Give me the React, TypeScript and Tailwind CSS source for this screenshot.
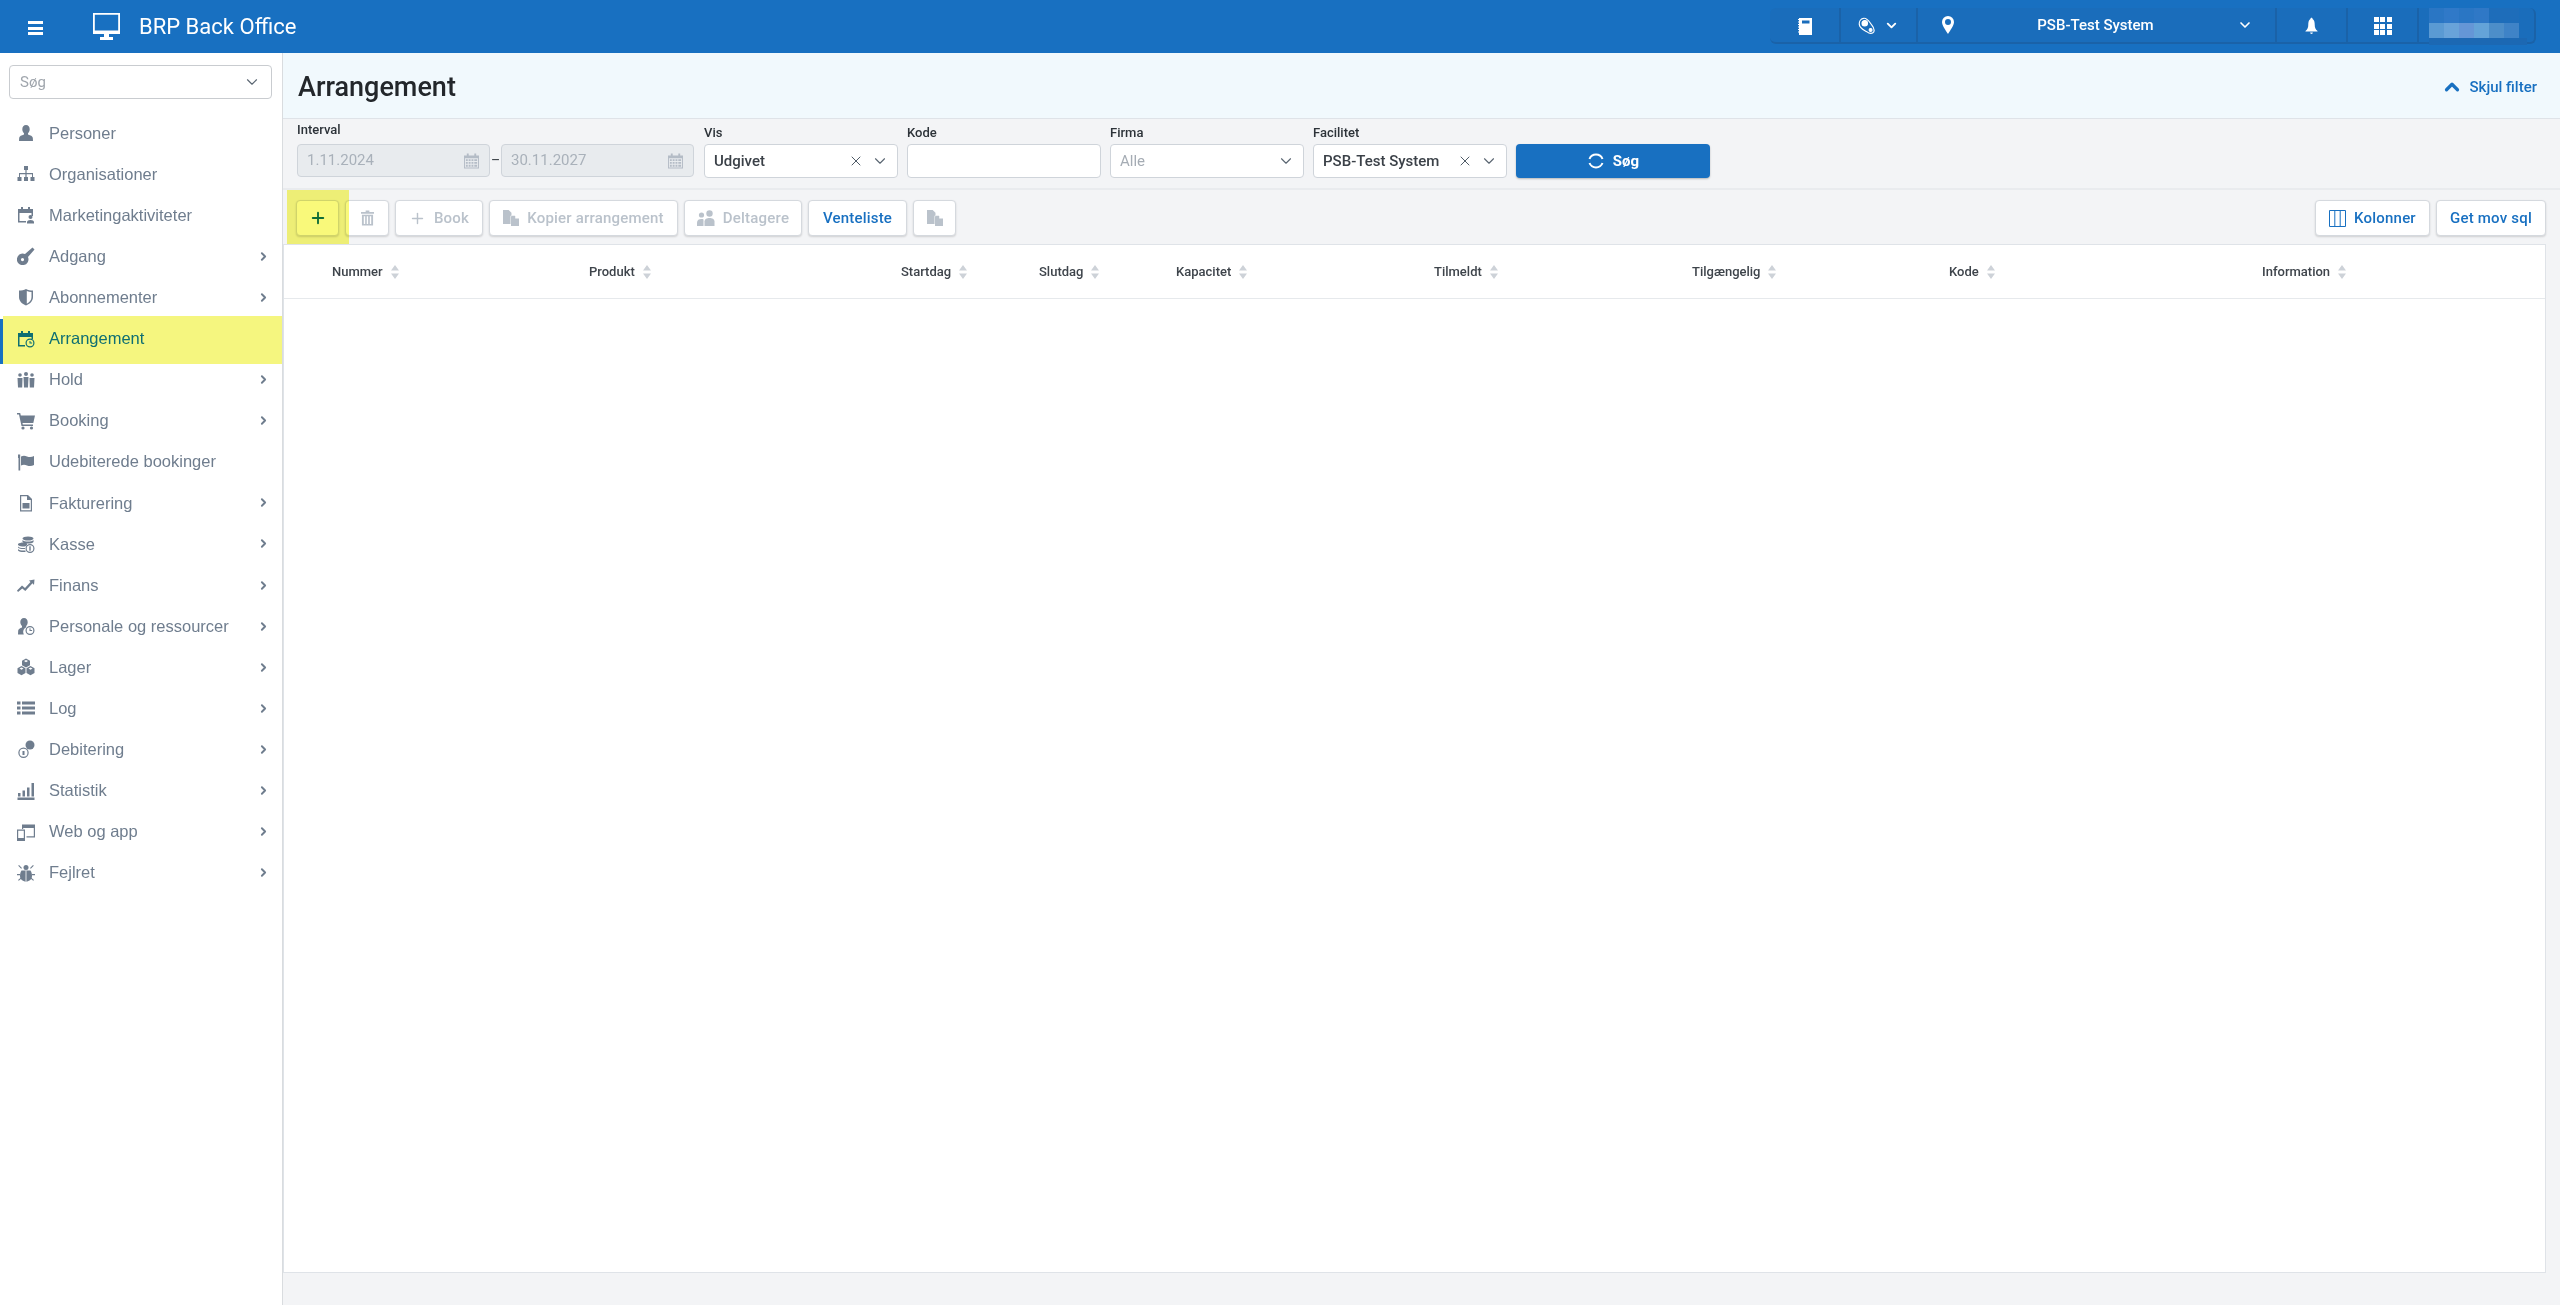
import { ReactNode } from "react";
import { ChevronDown, ChevronRight, ChevronUp, Plus, X } from "lucide-react";

const Svg = ({ children, className = "w-[18px] h-[18px]" }: { children: ReactNode; className?: string }) => (
  <svg viewBox="0 0 18 18" className={className} fill="currentColor">
    {children}
  </svg>
);

const PersonIcon = () => (
  <Svg>
    <path d="M9 1c2.300 0 3.700 1.700 3.700 4.200 0 1.700-.8 3.200-1.700 4v1.300c2.600.8 4.500 1.700 4.800 3.200l.2 3.300H2l.2-3.300c.3-1.500 2.200-2.400 4.800-3.200V9.200C6.100 8.400 5.300 6.900 5.300 5.200 5.300 2.700 6.700 1 9 1z" />
  </Svg>
);
const OrgIcon = () => (
  <Svg>
    <path d="M7 1h4v4H9.600v3H16v4h1.500v4h-4v-4H15V9.200H9.600V12H11v4H7v-4h1.400V9.200H3V12h1.500v4h-4v-4H2V8h6.400V5H7z" />
  </Svg>
);
const CalPersonIcon = () => (
  <Svg>
    <path d="M1 3h3V1h2v2h5V1h2v2h3v7h-1.500V7h-12v8H9v1.500H1z" />
    <circle cx="13.500" cy="11" r="2" />
    <path d="M10 17.500v-1.500c0-1.300 1.700-2 3.500-2s3.500.7 3.500 2v1.500z" />
  </Svg>
);
const KeyIcon = () => (
  <Svg>
    <path d="M15.500 .5L17.500 2.500 11 10a5.800 5.800 0 1 1-3-3zM5.500 11a1.600 1.600 0 1 0 0 3.200 1.600 1.600 0 0 0 0-3.200z" fillRule="evenodd" />
  </Svg>
);
const ShieldIcon = () => (
  <Svg>
    <path d="M2 2.500C4.500 2.500 7 2 9 1c2 1 4.500 1.500 7 1.500V9c0 4-3 7-7 8.500C5 16 2 13 2 9zM9.800 3v12.700c2.700-1.300 4.700-3.700 4.700-6.700V4C12.800 4 11.200 3.600 9.800 3z" fillRule="evenodd" />
  </Svg>
);
const CalClockIcon = () => (
  <Svg>
    <path d="M1 3h3V1h2v2h5V1h2v2h3v6h-1.500V7h-12v8H8v1.500H1z" />
    <path d="M13 8.500a4.500 4.500 0 1 0 0 9 4.500 4.500 0 0 0 0-9zm0 1.200a3.300 3.300 0 1 1 0 6.600 3.300 3.300 0 0 1 0-6.600zM12.500 11v2.600h2.600v-1h-1.600V11z" fillRule="evenodd" />
  </Svg>
);
const GroupIcon = () => (
  <Svg>
    <circle cx="3" cy="4" r="1.800" />
    <circle cx="9" cy="3" r="2" />
    <circle cx="15" cy="4" r="1.800" />
    <path d="M.5 7h5l-.3 9.500H1zM6.500 6h5l-.5 10.500H7zM12.500 7h5L17 16.500h-4.200z" />
  </Svg>
);
const CartIcon = () => (
  <Svg>
    <path d="M0 1h3.200l.6 2.500H18l-1.700 7.500H5.500l.3 1.500H16V14H4.500L2 2.500H0z" />
    <circle cx="6" cy="16" r="1.600" />
    <circle cx="14.500" cy="16" r="1.600" />
  </Svg>
);
const FlagIcon = () => (
  <Svg>
    <path d="M1 1.500h2.200v16H1.500V5H1z" />
    <path d="M4 3.500c2-1 4-1 6 0 2.500 1 5 .7 7-.5v9c-2 1.200-4.500 1.500-7 .5-2-1-4-1-6 0z" />
  </Svg>
);
const InvoiceIcon = () => (
  <Svg>
    <path d="M3 1h8l4 4v12.500H3zm1.200 1.200v14h9.600V6H10V2.200z" fillRule="evenodd" />
    <path d="M5.500 9h7v5.500h-7z" />
  </Svg>
);
const CoinsIcon = () => (
  <Svg>
    <ellipse cx="11" cy="3.500" rx="5.500" ry="2" />
    <path d="M5.500 5c1 1 3 1.500 5.500 1.500s4.500-.5 5.500-1.500v2c-1 1-3 1.500-5.500 1.500S6.500 8 5.500 7z" />
    <path d="M1 9c1-1 3-1.500 5.500-1.500S10 8 10 9v1c-1 1-2 1.500-3.500 1.500S2 11 1 10zM1 11.500c1 1 3 1.500 5.500 1.500l1.500-.1V14H6.500C4 14 2 13.500 1 12.500zM1 14c1 1 3 1.500 5.500 1.500H8.500v1.500h-2C4 17 2 16.500 1 15.500z" />
    <path d="M13 9a4.500 4.500 0 1 0 0 9 4.500 4.500 0 0 0 0-9zm0 1.200a3.300 3.300 0 1 1 0 6.600 3.300 3.300 0 0 1 0-6.600zM12.300 11.300h1.400v4.400h-1.400z" fillRule="evenodd" />
  </Svg>
);
const TrendIcon = () => (
  <Svg>
    <path d="M0 14.500l5-5 3 2.500 5.500-6L12 4.500 17.500 3.500 17 9l-1.500-1.700L8.300 15l-3-2.500L1 16z" />
  </Svg>
);
const PersonClockIcon = () => (
  <Svg>
    <path d="M7 1c2.300 0 3.700 1.700 3.700 4.200 0 1.500-.7 3-1.500 3.800v1.200c-2.200 1-3.200 3-3 5.300l.6 2H1l.2-4c.3-1.500 1.800-2.300 3.800-3.100V9C4.100 8.200 3.300 6.700 3.300 5 3.300 2.700 4.700 1 7 1z" />
    <path d="M13 9a4.500 4.500 0 1 0 0 9 4.500 4.500 0 0 0 0-9zm0 1.200a3.300 3.300 0 1 1 0 6.600 3.300 3.300 0 0 1 0-6.600zM12.500 11.300v2.600h2.600v-1h-1.600v-1.600z" fillRule="evenodd" />
  </Svg>
);
const CubesIcon = () => (
  <Svg>
    <path d="M9 .5l4 2.200v4.600l-4 2.200-4-2.200V2.700zm0 1.500L7 3.100 9 4.200l2-1.100zM4.500 8l4 2.300V15l-4 2.300-4-2.300v-4.700zm0 1.500l-2 1.100 2 1.200 2-1.200zM13.500 8l4 2.300V15l-4 2.300-4-2.300v-4.700zm0 1.500l-2 1.100 2 1.200 2-1.200z" fillRule="evenodd" />
  </Svg>
);
const ListIcon = () => (
  <Svg>
    <path d="M0 2.500h3.500v3H0zM5 2.500h13v3H5zM0 7.500h3.500v3H0zM5 7.500h13v3H5zM0 12.500h3.500v3H0zM5 12.500h13v3H5z" />
  </Svg>
);
const CoinsTwoIcon = () => (
  <Svg>
    <circle cx="13" cy="5" r="4.500" />
    <path d="M6.500 7.500a5.200 5.200 0 1 0 0 10.400 5.200 5.200 0 0 0 0-10.400zm0 1.200a4 4 0 1 1 0 8 4 4 0 0 1 0-8zM5.500 11h2v4h-2z" fillRule="evenodd" />
  </Svg>
);
const BarsIcon = () => (
  <Svg>
    <path d="M1 11h2.500v3.500H1zM5.500 8.500H8v6H5.500zM10 5.500h2.500v9H10zM14.500 1H17v13.500h-2.500zM.5 15.500h17V18H.5z" />
  </Svg>
);
const DevicesIcon = () => (
  <Svg>
    <path d="M5 1.500h13v13H9.500v-1.200h7.300V5H6.200v1H5z" fillRule="evenodd" />
    <path d="M0 6.500h8V18H0zm1.200 1.200V15h5.600V7.700z" fillRule="evenodd" />
  </Svg>
);
const BugIcon = () => (
  <Svg>
    <circle cx="9" cy="3.500" r="2.500" />
    <path d="M4.500 6.500h9c1 1.500 1.500 3.500 1.500 5.500 0 3-2.500 5.500-6 5.500S3 15 3 12c0-2 .5-4 1.500-5.500z" />
    <path d="M2 1l3 3-.8.8-3-3zM16 1l.8.8-3 3-.8-.8zM0 10h3v1.200H0zM15 10h3v1.200h-3zM1 16l3-2.500.8.800-3 2.500zM17 16l-3-2.500-.8.800 3 2.500z" />
    <path d="M8.600 6.500h.8v11h-.8z" fill="#fff" />
  </Svg>
);

const NAV: { label: string; icon: ReactNode; sub?: boolean; active?: boolean }[] = [
  { label: "Personer", icon: <PersonIcon /> },
  { label: "Organisationer", icon: <OrgIcon /> },
  { label: "Marketingaktiviteter", icon: <CalPersonIcon /> },
  { label: "Adgang", icon: <KeyIcon />, sub: true },
  { label: "Abonnementer", icon: <ShieldIcon />, sub: true },
  { label: "Arrangement", icon: <CalClockIcon />, active: true },
  { label: "Hold", icon: <GroupIcon />, sub: true },
  { label: "Booking", icon: <CartIcon />, sub: true },
  { label: "Udebiterede bookinger", icon: <FlagIcon /> },
  { label: "Fakturering", icon: <InvoiceIcon />, sub: true },
  { label: "Kasse", icon: <CoinsIcon />, sub: true },
  { label: "Finans", icon: <TrendIcon />, sub: true },
  { label: "Personale og ressourcer", icon: <PersonClockIcon />, sub: true },
  { label: "Lager", icon: <CubesIcon />, sub: true },
  { label: "Log", icon: <ListIcon />, sub: true },
  { label: "Debitering", icon: <CoinsTwoIcon />, sub: true },
  { label: "Statistik", icon: <BarsIcon />, sub: true },
  { label: "Web og app", icon: <DevicesIcon />, sub: true },
  { label: "Fejlret", icon: <BugIcon />, sub: true },
];

const COLUMNS = [
  { label: "Nummer", w: "w-[257px]" },
  { label: "Produkt", w: "w-[312px]" },
  { label: "Startdag", w: "w-[138px]" },
  { label: "Slutdag", w: "w-[137px]" },
  { label: "Kapacitet", w: "w-[258px]" },
  { label: "Tilmeldt", w: "w-[258px]" },
  { label: "Tilgængelig", w: "w-[257px]" },
  { label: "Kode", w: "w-[313px]" },
  { label: "Information", w: "flex-1" },
];

const CalendarIcon = () => (
  <svg viewBox="0 0 16 16" className="w-[15px] h-[16px] text-[#b4bcc6]" fill="currentColor">
    <path d="M3 0h2v2h6V0h2v2h3v14H0V2h3zM1 5v10h14V5z" fillRule="evenodd" />
    <path d="M2 6h2v2H2zM5 6h2v2H5zM8 6h2v2H8zM11 6h3v2h-3zM2 9h2v2H2zM5 9h2v2H5zM8 9h2v2H8zM11 9h3v2h-3zM2 12h2v2H2zM5 12h2v2H5zM8 12h2v2H8zM11 12h3v2h-3z" />
  </svg>
);

const CopyIcon = ({ className = "" }: { className?: string }) => (
  <svg viewBox="0 0 17 17" className={`w-[16px] h-[16px] ${className}`} fill="currentColor">
    <path d="M0 0h6l3 3v3h-1v9H0z" />
    <path d="M9.500 6h3l.5.500V9h4v8H8.500V7z" />
  </svg>
);

const TwoPeopleIcon = () => (
  <svg viewBox="0 0 18 16" className="w-[18px] h-[16px]" fill="currentColor">
    <circle cx="4.500" cy="5" r="2.600" />
    <path d="M0 16v-3.500C0 10 2 9 4.500 9c1 0 1.500.1 2 .4V16z" />
    <circle cx="12.500" cy="3.500" r="3.200" />
    <path d="M7.500 16v-4.500C7.500 9 10 8 12.500 8s5 1 5 3.500V16z" />
  </svg>
);

const TrashIcon = () => (
  <svg viewBox="0 0 14 16" className="w-[13px] h-[16px]" fill="currentColor">
    <path d="M5 0h4v1.500h5v2H0v-2h5zM1 4.500h12V16H1zm2 1.500v8.500h1.500V6zm3.200 0v8.500h1.500V6zm3.300 0v8.500H11V6z" fillRule="evenodd" />
  </svg>
);

const SortIcon = () => (
  <svg viewBox="0 0 8 14" className="w-[8px] h-[14px] text-[#cdd2d8]" fill="currentColor">
    <path d="M4 0l4 5.500H0zM0 8.500h8L4 14z" />
  </svg>
);

const Label = ({ children, className = "mb-[4px]" }: { children: ReactNode; className?: string }) => (
  <div className={`text-[13px] font-medium text-[#2d3339] leading-[15px] ${className}`}>{children}</div>
);

const Select = ({
  value,
  placeholder,
  clear,
  w = "w-[194px]",
}: {
  value: string;
  placeholder?: boolean;
  clear?: boolean;
  w?: string;
}) => (
  <div className={`${w} h-[34px] bg-white border border-[#cfd4da] rounded-[4px] flex items-center pl-[9px] pr-[8px] text-[15px]`}>
    <span className={`flex-1 truncate ${placeholder ? "text-[#a5acb4]" : "text-[#3b4148] font-medium"}`}>{value}</span>
    {clear && <X className="w-[16px] h-[16px] text-[#4f5b67] mr-[7px]" strokeWidth={1.500} />}
    <ChevronDown className="w-[18px] h-[18px] text-[#5a6672]" strokeWidth={1.500} />
  </div>
);

const DateInput = ({ value }: { value: string }) => (
  <div className="w-[193px] h-[33px] bg-[#e8ebee] border border-[#cfd4da] rounded-[4px] flex items-center justify-between pl-[9px] pr-[10px] text-[15px] text-[#a9b1ba]">
    {value}
    <CalendarIcon />
  </div>
);

const ToolButton = ({
  children,
  className = "",
  disabled,
}: {
  children: ReactNode;
  className?: string;
  disabled?: boolean;
}) => (
  <div
    className={`h-[36px] bg-white border border-[#d5d9de] rounded-[4px] shadow-[0_1px_2px_rgba(0,0,0,0.15)] flex items-center justify-center gap-[8px] text-[15px] font-medium tracking-[0.2px] ${
      disabled ? "text-[#bac2cb]" : "text-[#1870c1]"
    } ${className}`}
  >
    {children}
  </div>
);

const HeaderCell = ({ children, className = "" }: { children: ReactNode; className?: string }) => (
  <div className={`h-full flex items-center border-r-2 border-[#1a62a8] ${className}`}>{children}</div>
);

const MOSAIC = [
  ["bg-[#2a76c4]", "bg-[#3079c8]", "bg-[#2a76c4]", "bg-[#2f78c6]", "bg-[#1e6dba]", "bg-[#1e6dba]"],
  ["bg-[#5a9ad3]", "bg-[#69a3d9]", "bg-[#6596d6]", "bg-[#64a3d8]", "bg-[#4d8ec9]", "bg-[#3f83c7]"],
];

export default function App() {
  return (
    <div className="w-full h-[1305px] flex flex-col overflow-hidden bg-[#f3f4f6] font-['Roboto',sans-serif]">
      {/* top bar */}
      <header className="h-[53px] shrink-0 bg-[#1870c1] flex items-start text-white">
        <div className="w-[15px] ml-[28px] mt-[21px] flex flex-col gap-[2.500px]">
          <div className="h-[3px] bg-white" />
          <div className="h-[3px] bg-white" />
          <div className="h-[3px] bg-white" />
        </div>
        <svg viewBox="0 0 27 27" className="w-[27px] h-[27px] ml-[50px] mt-[13px]" fill="currentColor">
          <path d="M0 0h27v21H0zm1.800 1.800v15.700h23.400V1.800z" fillRule="evenodd" />
          <path d="M11 21h5v3h4v3H7v-3h4z" />
        </svg>
        <span className="ml-[19px] mt-[15px] text-[22px] leading-[24px]">BRP Back Office</span>
        <div className="ml-auto mr-[24px] mt-[8px] h-[36px] flex items-stretch bg-[#1a6dbb] rounded-[6px] border-r-2 border-b-2 border-[#1a62a8]">
          <HeaderCell className="w-[71px] justify-center pt-[2px]">
            {/* notebook */}
            <svg viewBox="0 0 14 17" className="w-[14px] h-[17px]" fill="currentColor">
              <path d="M1 0h13v17H1V0zm3 2.500v3h7.500v-3z" fillRule="evenodd" />
              <path d="M0 1h1v1H0zM0 3.500h1v1H0zM0 6h1v1H0zM0 8.500h1v1H0zM0 11h1v1H0zM0 13.500h1v1H0z" />
            </svg>
          </HeaderCell>
          <HeaderCell className="w-[77px] justify-center gap-[8px] pt-[1px]">
            <svg viewBox="0 0 20 20" className="w-[18px] h-[18px]" fill="none" stroke="currentColor" strokeWidth="1.300">
              <path d="M6 1.500c4-1 6 3 9 7 2 2.500 4 5 2.500 8-1.500 2.500-5 2-7.500 0-3-2-8-3.500-8.500-8C1 5 3 2 6 1.500z" />
              <circle cx="7.500" cy="7" r="3" fill="currentColor" />
              <circle cx="14" cy="14.500" r="1.600" fill="currentColor" />
            </svg>
            <ChevronDown className="w-[15px] h-[15px]" strokeWidth={3} />
          </HeaderCell>
          <HeaderCell className="w-[359px] pl-[24px] pr-[22px]">
            {/* pin */}
            <svg viewBox="0 0 12 18" className="w-[12px] h-[18px]" fill="currentColor">
              <path d="M6 0a6 6 0 0 1 6 6c0 3.500-3.500 8-6 12C3.500 14 0 9.500 0 6a6 6 0 0 1 6-6zm0 3a3 3 0 1 0 0 6 3 3 0 0 0 0-6z" fillRule="evenodd" />
            </svg>
            <span className="flex-1 text-center text-[15px] font-medium">PSB-Test System</span>
            <ChevronDown className="w-[16px] h-[16px]" strokeWidth={2.500} />
          </HeaderCell>
          <HeaderCell className="w-[71px] justify-center pt-[2px]">
            {/* bell */}
            <svg viewBox="0 0 14 18" className="w-[13px] h-[18px]" fill="currentColor">
              <path d="M7 0c.8 0 1.200.6 1.200 1.500C10 2.500 10.500 5 10.500 8c0 2.500.7 4.500 3 6.500V15H.5v-.5c2.300-2 3-4 3-6.500 0-3 .5-5.500 2.300-6.500C5.800.6 6.200 0 7 0z" />
              <path d="M5.500 16h3a1.500 1.500 0 0 1-3 0z" />
            </svg>
          </HeaderCell>
          <HeaderCell className="w-[71px] justify-center pt-[2px]">
            <div className="grid grid-cols-3 gap-[1.500px]">
              {[0, 1, 2, 3, 4, 5, 6, 7, 8].map((i) => (
                <div key={i} className="w-[5px] h-[5px] bg-white" />
              ))}
            </div>
          </HeaderCell>
          <div className="w-[115px] pl-[10px]">
            {MOSAIC.map((row, i) => (
              <div key={i} className="flex">
                {row.map((c, j) => (
                  <div key={j} className={`w-[15px] h-[15px] ${c}`} />
                ))}
              </div>
            ))}
            <div className="w-[98px] h-[7px] bg-[#1c68b3]" />
          </div>
        </div>
      </header>

      <div className="flex-1 flex min-h-0">
        {/* sidebar */}
        <aside className="w-[283px] shrink-0 bg-white border-r border-[#d9dcdf] font-['Liberation_Sans',sans-serif]">
          <div className="mt-[12px] ml-[9px] w-[263px] h-[34px] border border-[#c9ccd0] rounded-[4px] flex items-center pl-[10px] pr-[10px] text-[15px] text-[#a0a6ad] font-['Roboto',sans-serif]">
            <span className="flex-1">Søg</span>
            <ChevronDown className="w-[18px] h-[18px] text-[#5a6672]" strokeWidth={1.500} />
          </div>
          <nav className="mt-[13.500px]">
            {NAV.map((item) => (
              <div
                key={item.label}
                className={`relative h-[41.100px] flex items-center pl-[17px] pr-[12px] text-[16.500px] ${
                  item.active ? "text-[#0f6f72]" : "text-[#6f7d8e]"
                }`}
              >
                {item.active && (
                  <>
                    <div className="absolute left-[3px] right-0 -top-[2px] h-[48px] bg-[#f5f67f]" />
                    <div className="absolute left-0 w-[3px] top-[1px] h-[45px] bg-[#1870c1]" />
                  </>
                )}
                <span className="relative w-[32px] shrink-0">{item.icon}</span>
                <span className="relative flex-1">{item.label}</span>
                {item.sub && <ChevronRight className="w-[13px] h-[13px] text-[#6f7d8e]" strokeWidth={3.500} />}
              </div>
            ))}
          </nav>
        </aside>

        {/* main */}
        <main className="flex-1 min-w-0 flex flex-col relative">
          <div className="h-[66px] shrink-0 bg-[#f1f9fd] border-b border-[#dfe3e8] flex items-center justify-between pl-[15px] pr-[23px] pt-[3px]">
            <h1 className="text-[27px] font-medium text-[#23272b] leading-none">Arrangement</h1>
            <div className="flex items-center gap-[7px] text-[15px] font-medium text-[#1870c1]">
              <ChevronUp className="w-[22px] h-[22px]" strokeWidth={3.500} />
              Skjul filter
            </div>
          </div>

          <div className="h-[71px] shrink-0 border-b-2 border-[#e9ebee] flex items-start pl-[14px] pt-[25px]">
            <div className="flex flex-col -mt-[22px]">
              <Label className="mb-[7px]">Interval</Label>
              <div className="flex items-center">
                <DateInput value="1.11.2024" />
                <span className="w-[11px] text-center text-[14px] text-[#3b4148]">–</span>
                <DateInput value="30.11.2027" />
              </div>
            </div>
            <div className="flex flex-col -mt-[19px] ml-[10px]">
              <Label>Vis</Label>
              <Select value="Udgivet" clear />
            </div>
            <div className="flex flex-col -mt-[19px] ml-[9px]">
              <Label>Kode</Label>
              <div className="w-[194px] h-[34px] bg-white border border-[#cfd4da] rounded-[4px]" />
            </div>
            <div className="flex flex-col -mt-[19px] ml-[9px]">
              <Label>Firma</Label>
              <Select value="Alle" placeholder />
            </div>
            <div className="flex flex-col -mt-[19px] ml-[9px]">
              <Label>Facilitet</Label>
              <Select value="PSB-Test System" clear />
            </div>
            <div className="ml-[9px] w-[194px] h-[34px] bg-[#1870c1] rounded-[4px] shadow-[0_1px_2px_rgba(0,0,0,0.25)] flex items-center justify-center gap-[8px] text-white text-[15px] font-bold">
              <svg viewBox="0 0 18 18" className="w-[18px] h-[18px]" fill="none" stroke="currentColor" strokeWidth="2">
                <path d="M2.500 7A7 7 0 0 1 15.500 7M15.500 11A7 7 0 0 1 2.500 11" />
              </svg>
              Søg
            </div>
          </div>

          <div className="h-[54px] shrink-0 flex items-start pt-[10px] pl-[13px] pr-[14px] gap-[6px]">
            <ToolButton className="w-[43px] !text-[#0f6f72]">
              <Plus className="w-[18px] h-[18px]" strokeWidth={2.500} />
            </ToolButton>
            <ToolButton disabled className="w-[44px]">
              <TrashIcon />
            </ToolButton>
            <ToolButton disabled className="w-[88px]">
              <Plus className="w-[17px] h-[17px]" strokeWidth={2} />
              Book
            </ToolButton>
            <ToolButton disabled className="w-[189px]">
              <CopyIcon />
              Kopier arrangement
            </ToolButton>
            <ToolButton disabled className="w-[118px]">
              <TwoPeopleIcon />
              Deltagere
            </ToolButton>
            <ToolButton className="w-[99px]">Venteliste</ToolButton>
            <ToolButton disabled className="w-[43px]">
              <CopyIcon />
            </ToolButton>
            <ToolButton className="w-[115px] ml-auto">
              <svg viewBox="0 0 17 17" className="w-[17px] h-[17px]" fill="none" stroke="currentColor" strokeWidth="1">
                <path d="M.5.500h16v16H.5zM5.800.500v16M11.200.500v16" />
              </svg>
              Kolonner
            </ToolButton>
            <ToolButton className="w-[110px]">Get mov sql</ToolButton>
          </div>

          {/* yellow marker over the add button */}
          <div className="absolute left-[4px] top-[137px] w-[62px] h-[54px] bg-[#f9f97a] mix-blend-multiply pointer-events-none" />

          <div className="h-[1029px] shrink-0 mr-[14px] bg-white border border-[#dfe3e8]">
            <div className="h-[54px] flex items-center pl-[48px] border-b border-[#e6e9ec] text-[13px] font-medium text-[#3e444b]">
              {COLUMNS.map((col) => (
                <div key={col.label} className={`${col.w} flex items-center gap-[8px]`}>
                  {col.label}
                  <SortIcon />
                </div>
              ))}
            </div>
          </div>
        </main>
      </div>
    </div>
  );
}
